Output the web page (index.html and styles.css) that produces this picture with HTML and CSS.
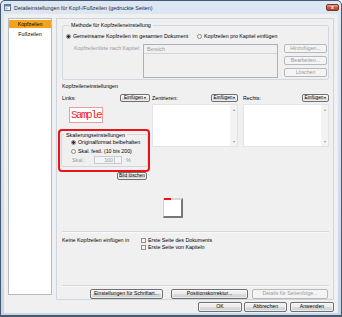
FILE: index.html
```html
<!DOCTYPE html>
<html lang="de">
<head>
  <meta charset="UTF-8">
  <meta name="viewport" content="width=device-width, initial-scale=1.0">
  <title>Detaileinstellungen für Kopf-/Fußzeilen</title>
  <link rel="stylesheet" href="styles.css">
</head>
<body>

<div class="window">
  <div class="titlebar">
    <svg class="app-icon" width="7" height="7" viewBox="0 0 7 7">
      <rect x="0.5" y="0.5" width="6" height="6" fill="#ffffff" stroke="#5a7aa0"/>
      <rect x="1" y="1" width="5" height="1.5" fill="#4f86c6"/>
      <rect x="1.5" y="3.5" width="2" height="2" fill="#f0a030"/>
    </svg>
    <span class="title">Detaileinstellungen für Kopf-/Fußzeilen (gedruckte Seiten)</span>
    <span class="close">x</span>
  </div>

  <div class="client">
    <div class="main">
      <ul class="sidebar">
        <li class="active">Kopfzeilen</li>
        <li>Fußzeilen</li>
      </ul>

      <div class="panel">
        <div class="group method">
          <span class="group-title">Methode für Kopfzeileneinstellung</span>
          <div class="radio-row">
            <span class="radio checked first">Gemeinsame Kopfzeilen im gesamten Dokument</span>
            <span class="radio">Kopfzeilen pro Kapitel einfügen</span>
          </div>
          <div class="chapter-row">
            <span class="chapter-label disabled">Kopfzeilenliste nach Kapitel:</span>
            <div class="listbox">
              <div class="list-head">Bereich</div>
            </div>
            <div class="list-buttons">
              <button class="btn" disabled>Hinzufügen...</button>
              <button class="btn" disabled>Bearbeiten...</button>
              <button class="btn" disabled>Löschen</button>
            </div>
          </div>
        </div>

        <div class="section-title">Kopfzeileneinstellungen</div>

        <div class="columns">
          <div class="col col-left">
            <div class="col-head">
              <span>Links:</span>
              <button class="btn insert wide">Einfügen<i class="caret"></i></button>
            </div>
            <div class="sample">Sample</div>
            <div class="highlight">
              <div class="group scale">
                <span class="group-title">Skalierungseinstellungen</span>
                <span class="radio checked">Originalformat beibehalten</span>
                <span class="radio">Skal. festl. (10 bis 200)</span>
                <div class="scale-row disabled">
                  <span class="scale-label">Skal.:</span>
                  <span class="spin"><span class="spin-value">100</span><span class="spin-btn"></span></span>
                  <span class="percent">%</span>
                </div>
              </div>
            </div>
            <button class="btn delete-image">Bild löschen</button>
          </div>

          <div class="col col-center">
            <div class="col-head">
              <span>Zentrieren:</span>
              <button class="btn insert">Einfügen<i class="caret"></i></button>
            </div>
            <div class="textbox">
              <div class="text-area"></div>
              <div class="scrollbar"><span>&#9652;</span><span>&#9662;</span></div>
            </div>
          </div>

          <div class="col col-right">
            <div class="col-head">
              <span>Rechts:</span>
              <button class="btn insert">Einfügen<i class="caret"></i></button>
            </div>
            <div class="textbox">
              <div class="text-area"></div>
              <div class="scrollbar"><span>&#9652;</span><span>&#9662;</span></div>
            </div>
          </div>
        </div>

        <div class="preview">
          <div class="paper"><span class="paper-mark"></span></div>
        </div>

        <div class="separator"></div>

        <div class="exclude">
          <span class="exclude-label">Keine Kopfzeilen einfügen in</span>
          <div class="checks">
            <span class="check">Erste Seite des Dokuments</span>
            <span class="check">Erste Seite von Kapiteln</span>
          </div>
        </div>

        <div class="separator lower"></div>

        <div class="panel-buttons">
          <button class="btn font-btn">Einstellungen für Schriftart...</button>
          <button class="btn pos-btn">Positionskorrektur...</button>
          <button class="btn details-btn" disabled>Details für Seitenfolge...</button>
        </div>
      </div>
    </div>

    <div class="dialog-buttons">
      <button class="btn ok">OK</button>
      <button class="btn cancel">Abbrechen</button>
      <button class="btn apply">Anwenden</button>
    </div>
  </div>
</div>

</body>
</html>
```

FILE: styles.css
```css
body {
  margin: 0;
  font-family: "Liberation Sans", Arial, sans-serif;
  font-size: 5.3px;
  color: #000000;
  background: #ffffff;
}
.window {
  width: 342px;
  height: 317px;
  box-sizing: border-box;
  border: 1px solid #46596e;
  border-bottom-width: 2px;
  border-radius: 5px 5px 0 0;
  background: linear-gradient(#dde7f3, #c6d6e9);
  padding: 0 3px 2px 3px;
  display: flex;
  flex-direction: column;
}
.titlebar {
  height: 13px;
  margin: 0 -1px;
  display: flex;
  align-items: center;
}
.app-icon {
  margin-left: 1px;
  margin-right: 3px;
}
.title {
  flex: 1;
  font-size: 5.4px;
  color: #1e2a38;
}
.close {
  width: 13px;
  height: 7px;
  box-sizing: border-box;
  border: 1px solid #7a3027;
  border-radius: 2px;
  background: linear-gradient(#e8a89c, #c85a4b 50%, #b8402f);
  color: #ffffff;
  font-size: 5px;
  line-height: 5px;
  text-align: center;
  font-weight: bold;
}
.client {
  flex: 1;
  background: #f0f0f0;
  padding: 4px 4px 0 4px;
}
.main {
  display: flex;
  gap: 4px;
  align-items: flex-start;
}
.sidebar {
  list-style: none;
  margin: 0;
  padding: 1px 0 0 0;
  width: 44px;
  height: 277px;
  box-sizing: border-box;
  background: #ffffff;
  border: 1px solid #b7bcc2;
}
.sidebar li {
  height: 8px;
  line-height: 8px;
  margin-bottom: 2px;
  text-align: center;
}
.sidebar li.active {
  background: #f7a21c;
}
.panel {
  width: 278px;
  height: 282px;
  box-sizing: border-box;
  border: 1px solid #cfd5dc;
  padding: 6px 0 0 5px;
}
.group {
  border: 1px solid #d3d8de;
  border-radius: 2px;
  box-sizing: border-box;
}
.group-title {
  display: block;
  width: max-content;
  margin: -4px 0 0 3px;
  padding: 0 2px;
  line-height: 7px;
  background: #f0f0f0;
}
.method {
  width: 267px;
  padding: 0 0 1px 3px;
}
.radio-row {
  display: flex;
  margin-top: 4px;
  height: 7px;
  align-items: center;
}
.radio {
  display: flex;
  align-items: center;
  line-height: 7px;
  white-space: nowrap;
}
.radio::before {
  content: "";
  width: 5px;
  height: 5px;
  box-sizing: border-box;
  border: 1px solid #8b8b8b;
  border-radius: 50%;
  background: #f4f4f4;
  margin-right: 2px;
}
.radio.checked::before {
  background: radial-gradient(circle, #2a2a2a 0 1.2px, #f4f4f4 1.6px);
}
.radio.first {
  width: 131px;
}
.chapter-row {
  display: flex;
  margin-top: 4px;
}
.chapter-label {
  width: 69px;
  margin-left: 8px;
  line-height: 9px;
  white-space: nowrap;
}
.disabled {
  color: #9a9a9a;
}
.listbox {
  width: 135px;
  height: 34px;
  box-sizing: border-box;
  border: 1px solid #adb2b8;
  background: #f0f0f0;
}
.list-head {
  height: 8px;
  line-height: 8px;
  padding-left: 3px;
  color: #9a9a9a;
  border-bottom: 1px solid #d5d5d5;
}
.list-buttons {
  margin-left: 6px;
  width: 43px;
  display: flex;
  flex-direction: column;
  gap: 3px;
}
.list-buttons .btn {
  height: 9px;
}
.btn {
  box-sizing: border-box;
  border: 1px solid #707070;
  border-radius: 2px;
  background: linear-gradient(#f3f3f3, #ebebeb 50%, #dddddd 51%, #cfcfcf);
  box-shadow: inset 0 0 0 1px rgba(255, 255, 255, 0.6);
  font-family: inherit;
  font-size: 5.2px;
  color: #000000;
  padding: 0;
  margin: 0;
  line-height: 1;
  white-space: nowrap;
  overflow: hidden;
}
.btn:disabled {
  border-color: #b5b9bd;
  background: #f4f4f4;
  box-shadow: none;
  color: #9a9a9a;
}
.section-title {
  margin-top: 3px;
  line-height: 7px;
}
.columns {
  display: flex;
  margin-top: 4px;
}
.col-left {
  width: 90px;
}
.col-center {
  width: 86px;
}
.col-right {
  width: 86px;
  margin-left: 5px;
}
.col-head {
  height: 8px;
  display: flex;
  justify-content: space-between;
  align-items: center;
}
.col-left .col-head {
  width: 88px;
}
.insert {
  width: 27px;
  height: 8px;
  font-size: 4.8px;
  display: flex;
  align-items: center;
  justify-content: center;
}
.insert.wide {
  width: 30px;
}
.caret {
  margin-left: 1px;
  border-left: 1.5px solid transparent;
  border-right: 1.5px solid transparent;
  border-top: 2px solid #222222;
}
.sample {
  margin: 5px 0 0 7px;
  width: 34px;
  height: 16px;
  box-sizing: border-box;
  border: 1px solid #f29a9a;
  background: #ffffff;
  color: #e8282c;
  font-family: "Liberation Mono", monospace;
  font-size: 11px;
  letter-spacing: -1.6px;
  line-height: 14px;
  text-align: center;
}
.highlight {
  margin: 6px 0 0 -4px;
  width: 92px;
  height: 43px;
  box-sizing: border-box;
  border: 2px solid #e8131b;
  border-radius: 4px;
  padding-top: 3px;
}
.scale {
  margin-left: 1px;
  width: 87px;
  height: 33px;
  padding: 0 0 0 9px;
}
.scale .group-title {
  margin-left: -7px;
  margin-top: -3px;
  line-height: 6px;
}
.scale .radio {
  line-height: 6px;
  margin-top: 1px;
}
.scale .radio + .radio {
  margin-top: 3px;
}
.scale-row {
  display: flex;
  align-items: center;
  margin-top: 2px;
  height: 8px;
}
.scale-label {
  margin-left: 1px;
  width: 22px;
}
.spin {
  display: flex;
  width: 28px;
  height: 8px;
  box-sizing: border-box;
  border: 1px solid #c8ccd0;
  background: #f4f4f4;
}
.spin-value {
  flex: 1;
  text-align: right;
  padding-right: 1px;
  line-height: 6px;
}
.spin-btn {
  width: 6px;
  border-left: 1px solid #c8ccd0;
  background: linear-gradient(#f4f4f4 45%, #c8ccd0 45% 55%, #f4f4f4 55%);
}
.percent {
  margin-left: 4px;
}
.delete-image {
  display: block;
  margin-left: 55px;
  width: 30px;
  height: 8px;
  font-size: 4.8px;
}
.textbox {
  margin-top: 2px;
  height: 43px;
  display: flex;
  box-sizing: border-box;
  border: 1px solid #e1e3e8;
  background: #ffffff;
}
.text-area {
  flex: 1;
}
.scrollbar {
  width: 7px;
  background: #f3f3f3;
  display: flex;
  flex-direction: column;
  justify-content: space-between;
  align-items: center;
  color: #9a9a9a;
  font-size: 4px;
  padding: 2px 0;
}
.preview {
  margin: 18px 0 0 101px;
}
.paper {
  width: 20px;
  height: 20px;
  box-sizing: border-box;
  background: #ffffff;
  border-top: 2px solid #d6d6d6;
  border-left: 1px solid #d0d0d0;
  border-right: 2px solid #777777;
  border-bottom: 2px solid #777777;
}
.paper-mark {
  display: block;
  width: 7px;
  height: 2px;
  margin-top: -2px;
  background: #e8131b;
}
.separator {
  width: 267px;
  margin-top: 13px;
  border-top: 1px solid #d5d7da;
  border-bottom: 1px solid #fafafa;
}
.separator.lower {
  margin-top: 34px;
}
.exclude {
  display: flex;
  margin-top: 4px;
  line-height: 7px;
}
.exclude-label {
  width: 79px;
}
.checks {
  display: flex;
  flex-direction: column;
}
.check {
  display: flex;
  align-items: center;
}
.check::before {
  content: "";
  width: 5px;
  height: 5px;
  box-sizing: border-box;
  border: 1px solid #8f8f8f;
  background: #f4f4f4;
  margin-right: 2px;
}
.panel-buttons {
  display: flex;
  margin-top: 2px;
}
.panel-buttons .btn {
  height: 10px;
}
.font-btn {
  margin-left: 28px;
  width: 73px;
}
.pos-btn {
  margin-left: 8px;
  width: 77px;
}
.details-btn {
  margin-left: 4px;
  width: 76px;
}
.dialog-buttons {
  display: flex;
  justify-content: flex-end;
  margin-top: 2px;
}
.dialog-buttons .btn {
  height: 10px;
}
.ok {
  width: 44px;
}
.cancel {
  width: 43px;
  margin-left: 2px;
}
.apply {
  width: 44px;
  margin-left: 3px;
}
```
